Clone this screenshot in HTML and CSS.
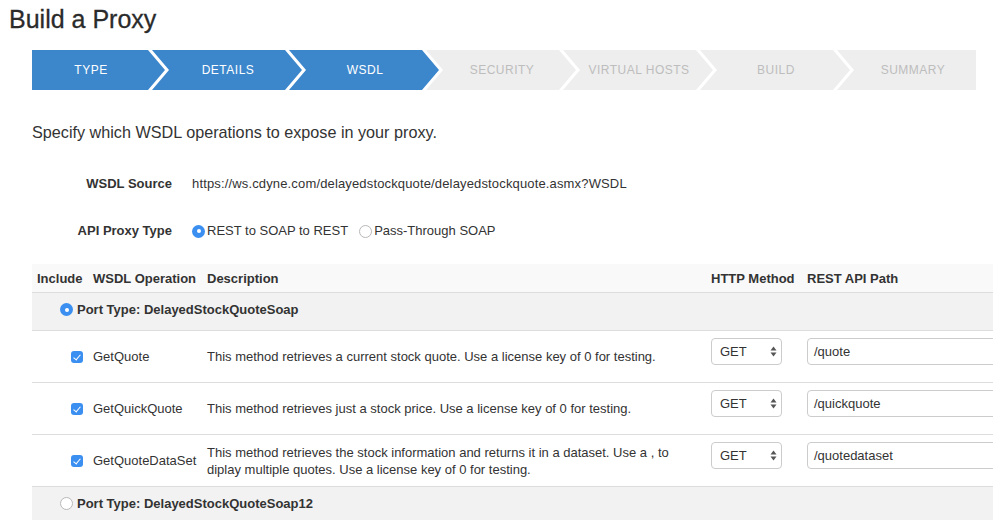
FILE: index.html
```html
<!DOCTYPE html>
<html>
<head>
<meta charset="utf-8">
<link rel="stylesheet" href="styles.css">
</head>
<body>
<h1 class="title">Build a Proxy</h1>

<div class="wizard">
  <div class="steps">
    <div class="step done">TYPE</div>
    <div class="step done">DETAILS</div>
    <div class="step done">WSDL</div>
    <div class="step">SECURITY</div>
    <div class="step">VIRTUAL HOSTS</div>
    <div class="step">BUILD</div>
    <div class="step last">SUMMARY</div>
  </div>
</div>

<p class="intro">Specify which WSDL operations to expose in your proxy.</p>

<div class="form">
  <div class="form-row">
    <div class="label">WSDL Source</div>
    <div class="value url">https://ws.cdyne.com/delayedstockquote/delayedstockquote.asmx?WSDL</div>
  </div>
  <div class="form-row">
    <div class="label">API Proxy Type</div>
    <div class="value options">
      <span class="opt"><span class="radio on"></span>REST to SOAP to REST</span>
      <span class="opt"><span class="radio"></span>Pass-Through SOAP</span>
    </div>
  </div>
</div>

<table class="ops">
  <colgroup>
    <col class="c-inc"><col class="c-op"><col class="c-desc"><col class="c-method"><col class="c-path">
  </colgroup>
  <thead>
    <tr>
      <th>Include</th>
      <th>WSDL Operation</th>
      <th>Description</th>
      <th>HTTP Method</th>
      <th>REST API Path</th>
    </tr>
  </thead>
  <tbody>
    <tr class="port">
      <td colspan="5"><span class="radio on"></span>Port Type: DelayedStockQuoteSoap</td>
    </tr>
    <tr class="op">
      <td class="inc"><span class="check"></span></td>
      <td>GetQuote</td>
      <td>This method retrieves a current stock quote. Use a license key of 0 for testing.</td>
      <td class="ctl"><div class="select">GET<svg class="arrows" width="7" height="11" viewBox="0 0 7 11"><path d="M3.5 0.5 L6.5 4.5 L0.5 4.5 Z M3.5 10.5 L6.5 6.5 L0.5 6.5 Z" fill="#555"/></svg></div></td>
      <td class="ctl"><div class="input">/quote</div></td>
    </tr>
    <tr class="op">
      <td class="inc"><span class="check"></span></td>
      <td>GetQuickQuote</td>
      <td>This method retrieves just a stock price. Use a license key of 0 for testing.</td>
      <td class="ctl"><div class="select">GET<svg class="arrows" width="7" height="11" viewBox="0 0 7 11"><path d="M3.5 0.5 L6.5 4.5 L0.5 4.5 Z M3.5 10.5 L6.5 6.5 L0.5 6.5 Z" fill="#555"/></svg></div></td>
      <td class="ctl"><div class="input">/quickquote</div></td>
    </tr>
    <tr class="op">
      <td class="inc"><span class="check"></span></td>
      <td>GetQuoteDataSet</td>
      <td>This method retrieves the stock information and returns it in a dataset. Use a , to diplay multiple quotes. Use a license key of 0 for testing.</td>
      <td class="ctl"><div class="select">GET<svg class="arrows" width="7" height="11" viewBox="0 0 7 11"><path d="M3.5 0.5 L6.5 4.5 L0.5 4.5 Z M3.5 10.5 L6.5 6.5 L0.5 6.5 Z" fill="#555"/></svg></div></td>
      <td class="ctl"><div class="input">/quotedataset</div></td>
    </tr>
    <tr class="port">
      <td colspan="5"><span class="radio"></span>Port Type: DelayedStockQuoteSoap12</td>
    </tr>
  </tbody>
</table>
</body>
</html>
```

FILE: styles.css
```css
html, body {
  margin: 0;
  padding: 0;
  overflow: hidden;
  background: #fff;
}
body {
  font-family: "Liberation Sans", Arial, sans-serif;
  color: #333;
  font-size: 13px;
}
.title {
  margin: 4px 0 0 9px;
  font-size: 25px;
  line-height: 30px;
  font-weight: normal;
  color: #2b2b2b;
  -webkit-text-stroke: 0.3px #2b2b2b;
}
.wizard {
  margin: 16px 0 0 32px;
  width: 944px;
  height: 40px;
  overflow: hidden;
}
.steps {
  display: flex;
  margin-left: -17px;
}
.step {
  flex: 0 0 150px;
  height: 40px;
  line-height: 40px;
  margin-right: -13px;
  padding: 0 17px 0 19px;
  box-sizing: border-box;
  text-align: center;
  font-size: 12px;
  letter-spacing: 0.5px;
  color: #bdbdbd;
  background: #eeeeee;
  clip-path: polygon(0 0, 133px 0, 150px 50%, 133px 100%, 0 100%, 17px 50%);
}
.step.last {
  flex-basis: 160px;
  clip-path: polygon(0 0, 100% 0, 100% 100%, 0 100%, 17px 50%);
  padding-right: 27px;
}
.step.done {
  background: #3c87cc;
  color: #fff;
}
.intro {
  margin: 32px 0 0 32px;
  font-size: 16.2px;
  line-height: 20px;
}
.form {
  margin: 32px 0 0 32px;
  display: flex;
  flex-direction: column;
  gap: 27px;
}
.form-row {
  display: flex;
  gap: 20px;
  line-height: 20px;
}
.label {
  width: 140px;
  text-align: right;
  font-weight: bold;
}
.url {
  letter-spacing: 0.15px;
}
.options {
  display: flex;
  gap: 11px;
}
.opt {
  display: flex;
  align-items: center;
  gap: 2px;
}
.radio {
  display: inline-block;
  box-sizing: border-box;
  width: 13px;
  height: 13px;
  border-radius: 50%;
  border: 1px solid #b8b8b8;
  background: #fff;
  position: relative;
  vertical-align: -2px;
}
.radio.on {
  border: none;
  background: #3b8ff0;
}
.radio.on::after {
  content: "";
  position: absolute;
  left: 4.5px;
  top: 4.5px;
  width: 4px;
  height: 4px;
  border-radius: 50%;
  background: #fff;
}
.ops {
  margin: 23px 0 0 32px;
  width: 1010px;
  table-layout: fixed;
  border-collapse: separate;
  border-spacing: 0;
  line-height: 17px;
}
.c-inc { width: 56px; }
.c-op { width: 114px; }
.c-desc { width: 504px; }
.c-method { width: 96px; }
.c-path { width: 240px; }
.ops th {
  text-align: left;
  font-weight: bold;
  padding: 6px 5px 5px;
  background: #f9f9f9;
  border-bottom: 1px solid #dddddd;
  white-space: nowrap;
}
.ops td {
  padding: 0 5px;
  vertical-align: middle;
  border-bottom: 1px solid #dddddd;
}
.ops tr.port td {
  background: #f2f2f2;
  font-weight: bold;
  padding: 8px 5px 12px 28px;
}
.ops tr.port .radio {
  margin-right: 4px;
}
.ops td.inc {
  text-align: right;
}
.ops td.ctl {
  vertical-align: top;
  padding-top: 7px;
  padding-bottom: 17px;
}
.check {
  display: inline-block;
  width: 12px;
  height: 12px;
  border-radius: 3px;
  background: #3b8ff0;
  position: relative;
  vertical-align: -2px;
}
.check::after {
  content: "";
  position: absolute;
  left: 4px;
  top: 1.5px;
  width: 3px;
  height: 6px;
  border: solid #fff;
  border-width: 0 1.5px 1.5px 0;
  transform: rotate(40deg);
}
.select {
  box-sizing: border-box;
  width: 71px;
  height: 27px;
  border: 1px solid #cccccc;
  border-radius: 4px;
  padding: 0 4px 0 8px;
  line-height: 25px;
  display: flex;
  justify-content: space-between;
  align-items: center;
  background: #fff;
}
.input {
  box-sizing: border-box;
  width: 200px;
  height: 27px;
  border: 1px solid #cccccc;
  border-radius: 4px;
  padding: 0 6px;
  line-height: 25px;
  background: #fff;
}
```
